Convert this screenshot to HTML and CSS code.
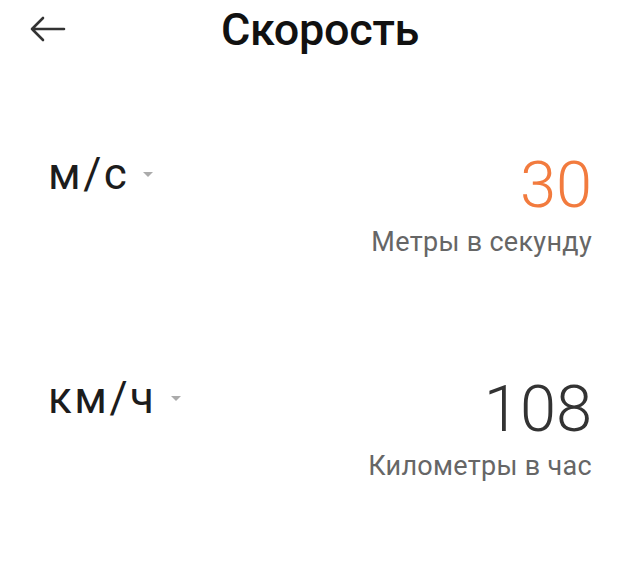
FILE: index.html
```html
<!DOCTYPE html>
<html lang="ru">
<head>
<meta charset="utf-8">
<title>Скорость</title>
<link rel="stylesheet" href="styles.css">
</head>
<body>
<header class="header">
  <div class="back">
    <svg class="back-icon" width="36" height="26" viewBox="0 0 36 26" aria-hidden="true">
      <path d="M34 13 H2 M13 2 L2 13 L13 24" fill="none" stroke="#333" stroke-width="2.6" stroke-linecap="round" stroke-linejoin="round"/>
    </svg>
  </div>
  <h1 class="title">Скорость</h1>
  <div class="spacer"></div>
</header>
<main class="rows">
  <section class="row">
    <div class="unit">
      <span class="unit-name">м/с</span>
      <span class="caret"></span>
    </div>
    <div class="value">
      <div class="number active">30</div>
      <div class="desc">Метры в секунду</div>
    </div>
  </section>
  <section class="row">
    <div class="unit">
      <span class="unit-name">км/ч</span>
      <span class="caret"></span>
    </div>
    <div class="value">
      <div class="number">108</div>
      <div class="desc">Километры в час</div>
    </div>
  </section>
</main>
</body>
</html>
```
FILE: styles.css
```css
html, body {
  margin: 0;
  padding: 0;
  background: #ffffff;
}

body {
  font-family: Roboto, "Noto Sans", "Liberation Sans", sans-serif;
  width: 640px;
  height: 587px;
  overflow: hidden;
}

.header {
  display: grid;
  grid-template-columns: 1fr auto 1fr;
  align-items: center;
  height: 58px;
}

.back {
  padding-left: 30px;
  display: flex;
  align-items: center;
  margin-top: -2px;
}

.back-icon {
  display: block;
}

.title {
  margin: 0;
  font-size: 45px;
  line-height: 59px;
  font-weight: 500;
  color: #111111;
  letter-spacing: -0.3px;
}

.rows {
  display: flex;
  flex-direction: column;
  gap: 113px;
  padding: 90px 48px 0 48px;
}

.row {
  display: flex;
  justify-content: space-between;
  align-items: flex-start;
}

.unit {
  display: flex;
  align-items: center;
  gap: 14px;
  padding-left: 0;
}

.unit-name {
  font-size: 44px;
  line-height: 53px;
  letter-spacing: 2.5px;
  color: #1c1c1c;
}

.caret {
  width: 0;
  height: 0;
  border-left: 5.5px solid transparent;
  border-right: 5.5px solid transparent;
  border-top: 5px solid #ababab;
}

.value {
  display: flex;
  flex-direction: column;
  align-items: flex-end;
}

.number {
  font-size: 65px;
  line-height: 74px;
  font-weight: 300;
  color: #333333;
}

.number.active {
  color: #f27b3e;
}

.desc {
  margin-top: 3px;
  font-size: 27px;
  line-height: 34px;
  letter-spacing: 0.3px;
  color: #666666;
}
```
